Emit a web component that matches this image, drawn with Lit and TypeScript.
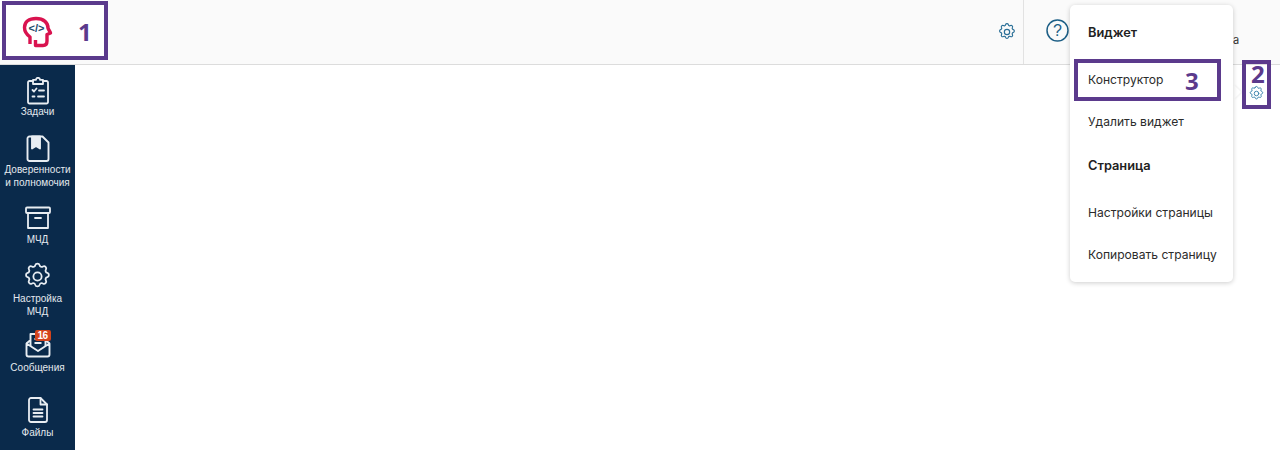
import { LitElement, html, css } from "lit";
import { customElement } from "lit/decorators.js";

const gear = (size: number, color: string, sw: number) => html`<svg width=${size} height=${size} viewBox="0 0 24 24" fill="none" stroke=${color} stroke-width=${sw} stroke-linecap="round" stroke-linejoin="round"><path d="M10.3 3.2c.4-1.6 2.9-1.6 3.3 0a1.7 1.7 0 0 0 2.6 1.1c1.5-.9 3.2.8 2.3 2.3a1.7 1.7 0 0 0 1.1 2.6c1.6.4 1.6 2.9 0 3.3a1.7 1.7 0 0 0-1.1 2.6c.9 1.5-.8 3.2-2.3 2.3a1.7 1.7 0 0 0-2.6 1.1c-.4 1.6-2.9 1.6-3.3 0a1.7 1.7 0 0 0-2.6-1.1c-1.5.9-3.2-.8-2.3-2.3a1.7 1.7 0 0 0-1.1-2.6c-1.6-.4-1.6-2.9 0-3.3a1.7 1.7 0 0 0 1.1-2.6c-.9-1.5.8-3.2 2.3-2.3a1.7 1.7 0 0 0 2.6-1.1z"/><circle cx="12" cy="12" r="3.2"/></svg>`;

const W = "#e8edf2";
const icoTasks = html`<svg width="24" height="28" viewBox="0 0 24 28" fill="none" stroke=${W} stroke-width="1.8" stroke-linecap="round" stroke-linejoin="round"><path d="M7 4H3.500A1.500 1.500 0 0 0 2 5.500V25a1.500 1.500 0 0 0 1.500 1.500h17A1.500 1.500 0 0 0 22 25V5.500A1.500 1.500 0 0 0 20.500 4H17"/><path d="M7 2.800h3a2 2 0 0 1 4 0h3V7H7z"/><path d="M6.500 13l1.500 1.500 2.500-3M13 13.500h5M6.500 19.500h2M12 19.500h6"/></svg>`;
const icoDoc = html`<svg width="24" height="28" viewBox="0 0 24 28" fill="none" stroke=${W} stroke-width="1.9" stroke-linejoin="round"><path d="M3.500 1.500h13l6 6V24a2 2 0 0 1-2 2h-17a2 2 0 0 1-2-2V3.500a2 2 0 0 1 2-2z"/><path fill=${W} d="M6 1.500h8v12l-4-2.500-4 2.500z"/></svg>`;
const icoBox = html`<svg width="26" height="24" viewBox="0 0 26 24" fill="none" stroke=${W} stroke-width="1.8" stroke-linejoin="round"><rect x="1" y="1.500" width="24" height="5.500" rx="1"/><path d="M3 7v15h20V7"/><path d="M10 12h6" stroke-linecap="round"/></svg>`;
const icoMail = html`<svg width="26" height="26" viewBox="0 0 26 26" fill="none" stroke=${W} stroke-width="1.900" stroke-linejoin="round"><path d="M1.500 11.500 5.500 8M24.500 11.500 20.500 8M5.500 14V2h15v12"/><path d="M1.500 11.500v11a2 2 0 0 0 2 2h19a2 2 0 0 0 2-2v-11L13 19z"/><path d="M9.500 7h7M9.500 11h7"/></svg>`;
const icoFile = html`<svg width="20" height="26" viewBox="0 0 20 26" fill="none" stroke=${W} stroke-width="1.8" stroke-linejoin="round" stroke-linecap="round"><path d="M3 1h9.500L19 7.500V23a2 2 0 0 1-2 2H3a2 2 0 0 1-2-2V3a2 2 0 0 1 2-2z"/><path d="M12.500 1v6.500H19M5.500 12.500h9M5.500 16h9M5.500 19.500h9"/></svg>`;

@customElement("app-root")
export class AppRoot extends LitElement {
  static styles = css`
    :host { display: block; width: 1280px; height: 450px; overflow: hidden; position: relative; background: #fff; font-family: "Liberation Sans", Arial, sans-serif; }
    .header { height: 64px; border-bottom: 1px solid #dcdcdc; background: #fafafa; display: flex; align-items: center; }
    .logoWrap { width: 107px; height: 60px; background: #fff; flex: none; margin-top: -4px; }
    .spacer { flex: 1; }
    .hgear { display: flex; margin-right: 6px; }
    .hsep { width: 1px; height: 64px; background: #e2e2e2; margin-right: 22px; }
    .help { display: flex; margin-right: 211px; margin-top: -4px; }
    .body { display: flex; height: 385px; }
    .side { width: 75px; background: #0a2a4b; color: #e4e9ee; display: flex; flex-direction: column; align-items: center; flex: none; overflow: hidden; }
    .item { display: flex; flex-direction: column; align-items: center; text-align: center; font-size: 10px; line-height: 13px; width: 75px; }
    .ico { height: 28px; display: flex; align-items: center; justify-content: center; position: relative; }
    .badge { position: absolute; left: 10px; top: -1px; background: #d4441c; color: #fff; font-size: 10px; font-weight: 700; line-height: 11px; border-radius: 2px; width: 16px; text-align: center; letter-spacing: -.5px; }
    .t1 { margin-top: 12px; } .l1 { margin-top: 0; }
    .t2 { margin-top: 17px; } .l2 { margin-top: 0; }
    .t3 { margin-top: 15px; } .l3 { margin-top: 1px; }
    .t4 { margin-top: 16px; } .l4 { margin-top: 2px; }
    .t5 { margin-top: 13px; } .l5 { margin-top: 2px; }
    .t6 { margin-top: 22px; } .l6 { margin-top: 2px; }
    .menu { position: absolute; left: 1070px; top: 5px; width: 163px; height: 277px; background: #fff; border-radius: 5px; box-shadow: 0 1px 5px rgba(0,0,0,.2); font-family: Inter, "Noto Sans", sans-serif; font-size: 12.100px; color: #2b2b2b; display: flex; flex-direction: column; padding: 20px 0 0 18px; box-sizing: border-box; }
    .mi { line-height: 16px; white-space: nowrap; height: 16px; margin-bottom: 26px; }
    .b { font-weight: 600; font-size: 12.800px; color: #222; }
    .m31 { margin-bottom: 31px; }
    .m28 { margin-bottom: 28px; }
    .arrow { position: absolute; left: 1229px; top: 87px; width: 10px; height: 10px; background: #fff; transform: rotate(45deg); box-shadow: 1px -1px 2px rgba(0,0,0,.06); }
    .gear2 { position: absolute; left: 1248px; top: 85px; display: flex; }
    .frag { position: absolute; left: 1233px; top: 33px; font-family: Inter, sans-serif; font-size: 11px; line-height: 14px; color: #333; }
    .logo { position: absolute; left: 0; top: 0; }
    .box { position: absolute; border: 4px solid #5b3a8c; box-sizing: border-box; }
    .bx1 { left: 2px; top: 1px; width: 106px; height: 59px; }
    .bx3 { left: 1074px; top: 59px; width: 147px; height: 42px; }
    .bx2 { left: 1242px; top: 60px; width: 29px; height: 49px; }
    .num { position: absolute; color: #5b3a8c; font-family: "Open Sans", sans-serif; font-weight: 700; font-size: 24px; line-height: 26px; }
    .n1 { left: 78px; top: 19px; } .n3 { left: 1185px; top: 68px; } .n2 { left: 1251px; top: 61px; }
  `;

  render() {
    return html`
      <div class="header">
        <div class="logoWrap"></div>
        <div class="spacer"></div>
        <div class="hgear">${gear(20, "#2a6f97", 1.4)}</div>
        <div class="hsep"></div>
        <div class="help">
          <svg width="23" height="23" viewBox="0 0 23 23" fill="none"><circle cx="11.500" cy="11.500" r="10.500" stroke="#1d5f86" stroke-width="1.500"/><text x="11.500" y="17" text-anchor="middle" font-family="Liberation Sans" font-size="16" fill="#1d5f86">?</text></svg>
        </div>
      </div>
      <div class="body">
        <nav class="side">
          <div class="item t1"><div class="ico">${icoTasks}</div><div class="l1">Задачи</div></div>
          <div class="item t2"><div class="ico">${icoDoc}</div><div class="l2">Доверенности<br />и полномочия</div></div>
          <div class="item t3"><div class="ico">${icoBox}</div><div class="l3">МЧД</div></div>
          <div class="item t4"><div class="ico">${gear(31, W, 1.4)}</div><div class="l4">Настройка<br />МЧД</div></div>
          <div class="item t5"><div class="ico">${icoMail}<span class="badge">16</span></div><div class="l5">Сообщения</div></div>
          <div class="item t6"><div class="ico">${icoFile}</div><div class="l6">Файлы</div></div>
        </nav>
      </div>

      <div class="frag">а</div>
      <div class="arrow"></div>
      <div class="menu">
        <div class="mi b m31">Виджет</div>
        <div class="mi">Конструктор</div>
        <div class="mi m28">Удалить виджет</div>
        <div class="mi b m31">Страница</div>
        <div class="mi">Настройки страницы</div>
        <div class="mi">Копировать страницу</div>
      </div>
      <div class="gear2">${gear(17, "#3f86ad", 1.4)}</div>

      <svg class="logo" width="60" height="56" viewBox="0 0 60 56" fill="none">
        <path d="M30 44V37C26 34 24.500 31 24.500 27.500 24.500 22 29 18.500 36 18.500 44 18.500 48 23 48 28 48.500 30 50.500 32 50.500 33L47 34.500V41C47 44 45.500 45.500 43 45.500H35.500V40" stroke="#d9134f" stroke-width="3.400" stroke-linejoin="round"/>
        <text x="36.500" y="32" text-anchor="middle" font-family="Liberation Sans" font-weight="700" font-size="11" fill="#1b4a6b">&lt;/&gt;</text>
      </svg>

      <div class="box bx1"></div><div class="num n1">1</div>
      <div class="box bx3"></div><div class="num n3">3</div>
      <div class="box bx2"></div><div class="num n2">2</div>
    `;
  }
}
